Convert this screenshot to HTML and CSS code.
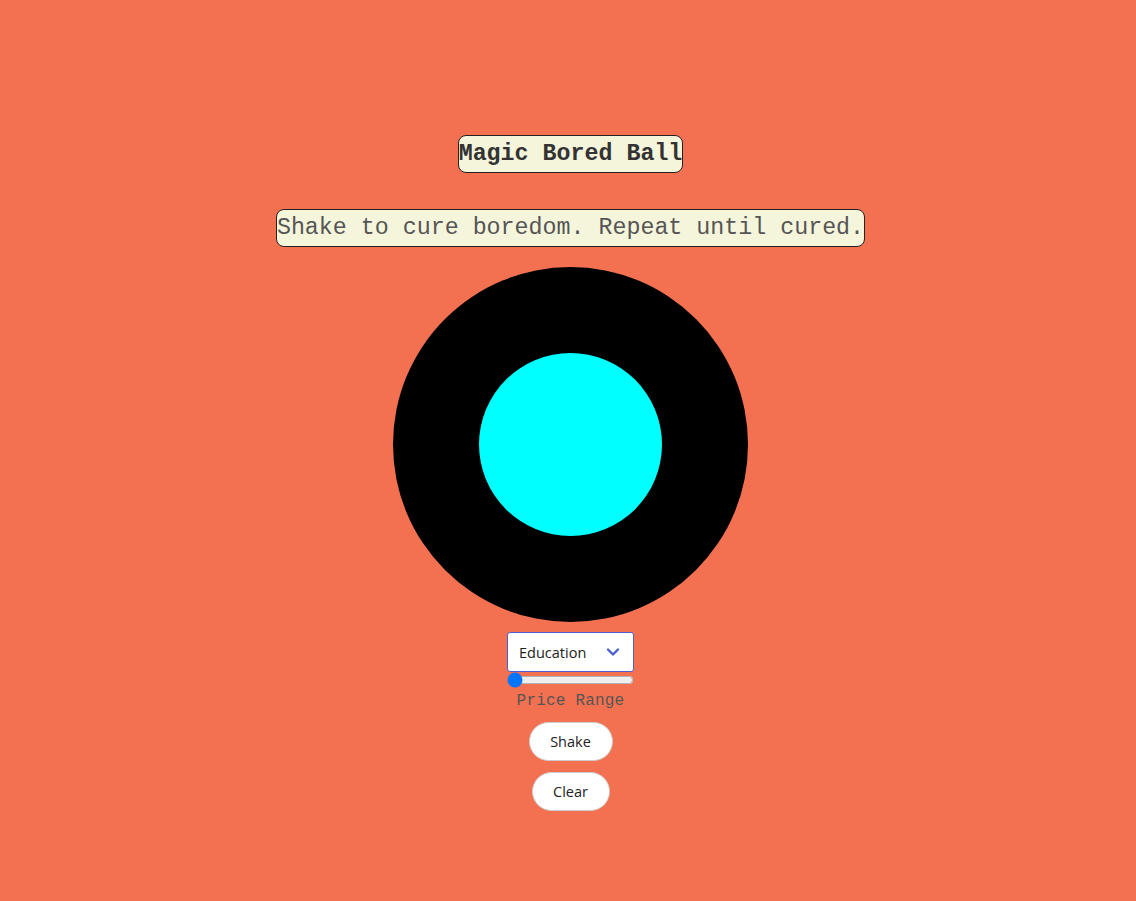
FILE: index.html
```html
<!DOCTYPE html>
<html>
<head>
<meta charset="utf-8">
<title>Magic Bored Ball</title>
<link rel="stylesheet" href="styles.css">
</head>
<body>
<main class="app">
  <h1 class="title">Magic Bored Ball</h1>
  <p class="subtitle">Shake to cure boredom. Repeat until cured.</p>
  <div class="ball">
    <div class="window"></div>
  </div>
  <div class="select-wrap">
    <select class="category">
      <option>Education</option>
      <option>Recreational</option>
      <option>Social</option>
    </select>
    <svg class="chevron" width="14" height="10" viewBox="0 0 14 10"><path d="M2 2.5 L7 7.5 L12 2.5" fill="none" stroke="#4a5fd0" stroke-width="2.4" stroke-linecap="round" stroke-linejoin="round"/></svg>
  </div>
  <input class="range" type="range" min="0" max="1" step="0.1" value="0">
  <label class="range-label">Price Range</label>
  <button class="btn btn-shake">Shake</button>
  <button class="btn btn-clear">Clear</button>
</main>
</body>
</html>
```

FILE: styles.css
```css
html, body {
  margin: 0;
  padding: 0;
}
body {
  background: #f37150;
  min-height: 901px;
  font-family: "Liberation Mono", "Courier New", monospace;
}
.app {
  display: flex;
  flex-direction: column;
  align-items: center;
  padding-top: 135px;
  padding-left: 5px;
}
.title {
  margin: 0;
  font-family: "Liberation Mono", "Courier New", monospace;
  font-weight: bold;
  font-size: 23.3px;
  line-height: 36px;
  color: #333;
  background: #f5f5dc;
  border: 1px solid #222;
  border-radius: 8px;
  white-space: nowrap;
}
.subtitle {
  margin: 36px 0 0;
  font-family: "Liberation Mono", "Courier New", monospace;
  font-size: 23.3px;
  line-height: 36px;
  color: #555;
  background: #f5f5dc;
  border: 1px solid #222;
  border-radius: 8px;
  white-space: nowrap;
}
.ball {
  margin-top: 20px;
  width: 355px;
  height: 355px;
  border-radius: 50%;
  background: #000;
  display: flex;
  align-items: center;
  justify-content: center;
}
.window {
  width: 183px;
  height: 183px;
  border-radius: 50%;
  background: #00ffff;
}
.select-wrap {
  position: relative;
  margin-top: 10px;
  width: 127px;
  height: 40px;
}
.category {
  appearance: none;
  -webkit-appearance: none;
  box-sizing: border-box;
  width: 127px;
  height: 40px;
  margin: 0;
  padding: 0 30px 0 11px;
  font-family: "Open Sans", "Noto Sans", sans-serif;
  font-size: 14.5px;
  color: #222;
  background: #fff;
  border: 1px solid #4a5fd0;
  border-radius: 3px;
  outline: none;
}
.chevron {
  position: absolute;
  right: 14px;
  top: 15px;
  pointer-events: none;
}
.range {
  width: 127px;
  height: 16px;
  margin: 0;
  accent-color: #0075ff;
}
.range-label {
  margin-top: 4px;
  font-family: "Liberation Mono", "Courier New", monospace;
  font-size: 16px;
  line-height: 18px;
  color: #555;
  letter-spacing: 0.2px;
}
.btn {
  font-family: "Open Sans", "Noto Sans", sans-serif;
  font-size: 14.5px;
  color: #222;
  background: #fff;
  border: 1px solid #ccc;
  border-radius: 20px;
  height: 39px;
  box-sizing: border-box;
  cursor: pointer;
}
.btn-shake {
  margin-top: 12px;
  width: 84px;
}
.btn-clear {
  margin-top: 11px;
  width: 78px;
}
```
